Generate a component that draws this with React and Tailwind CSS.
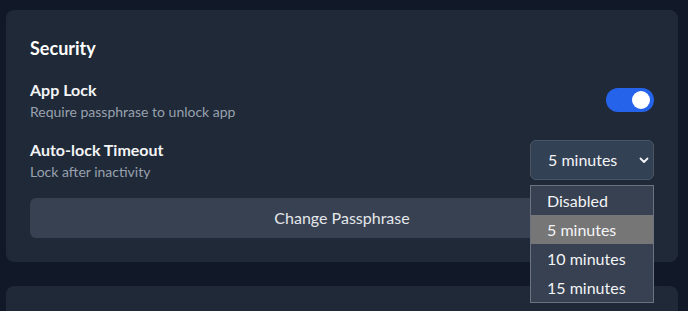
import React from "react";

export default function App() {
  return (
    <div className="relative h-[311px] w-[688px] overflow-hidden bg-[#111827] pt-[10px] pl-[6px] text-gray-100" style={{ fontFamily: 'Lato, "Noto Sans", sans-serif' }}>
      <div className="flex w-[672px] flex-col gap-6">
        <div className="rounded-lg bg-[#1f2937] p-6">
          <h2 className="mb-4 text-lg leading-7 font-bold text-white">Security</h2>
          <div className="flex flex-col gap-4">
            <div className="flex items-center justify-between">
              <div>
                <div className="text-base leading-6 font-bold text-gray-100">App Lock</div>
                <div className="text-sm leading-5 text-gray-400">Require passphrase to unlock app</div>
              </div>
              <div className="relative h-6 w-12 rounded-full bg-[#2563eb]">
                <div className="absolute top-[3px] right-[4px] h-[18px] w-[18px] rounded-full bg-white" />
              </div>
            </div>
            <div className="relative flex items-center justify-between">
              <div>
                <div className="text-base leading-6 font-bold text-gray-100">Auto-lock Timeout</div>
                <div className="text-sm leading-5 text-gray-400">Lock after inactivity</div>
              </div>
              <div className="flex h-10 w-[124px] items-center justify-between rounded-md border border-[#4b5563] bg-[#334155] pr-[4px] pl-[17px] text-base text-gray-100">
                <span>5 minutes</span>
                <svg width="10" height="10" viewBox="0 0 10 10" fill="none">
                  <path d="M1.5 3.5 L5 7 L8.5 3.5" stroke="#f3f4f6" strokeWidth="1.8" strokeLinecap="round" strokeLinejoin="round" />
                </svg>
              </div>
            </div>
            <button className="h-10 w-full rounded-md bg-[#374151] text-base text-gray-200">Change Passphrase</button>
          </div>
        </div>
        <div className="h-10 rounded-t-lg bg-[#1f2937]" />
      </div>
      <div className="absolute top-[185px] left-[530px] w-[124px] border border-[#6b7280] bg-[#374151] text-base text-gray-100">
        <div className="flex h-[29px] items-center pl-[16px]">Disabled</div>
        <div className="flex h-[29px] items-center bg-[#767676] pl-[16px]">5 minutes</div>
        <div className="flex h-[29px] items-center pl-[16px]">10 minutes</div>
        <div className="flex h-[29px] items-center pl-[16px]">15 minutes</div>
      </div>
    </div>
  );
}
